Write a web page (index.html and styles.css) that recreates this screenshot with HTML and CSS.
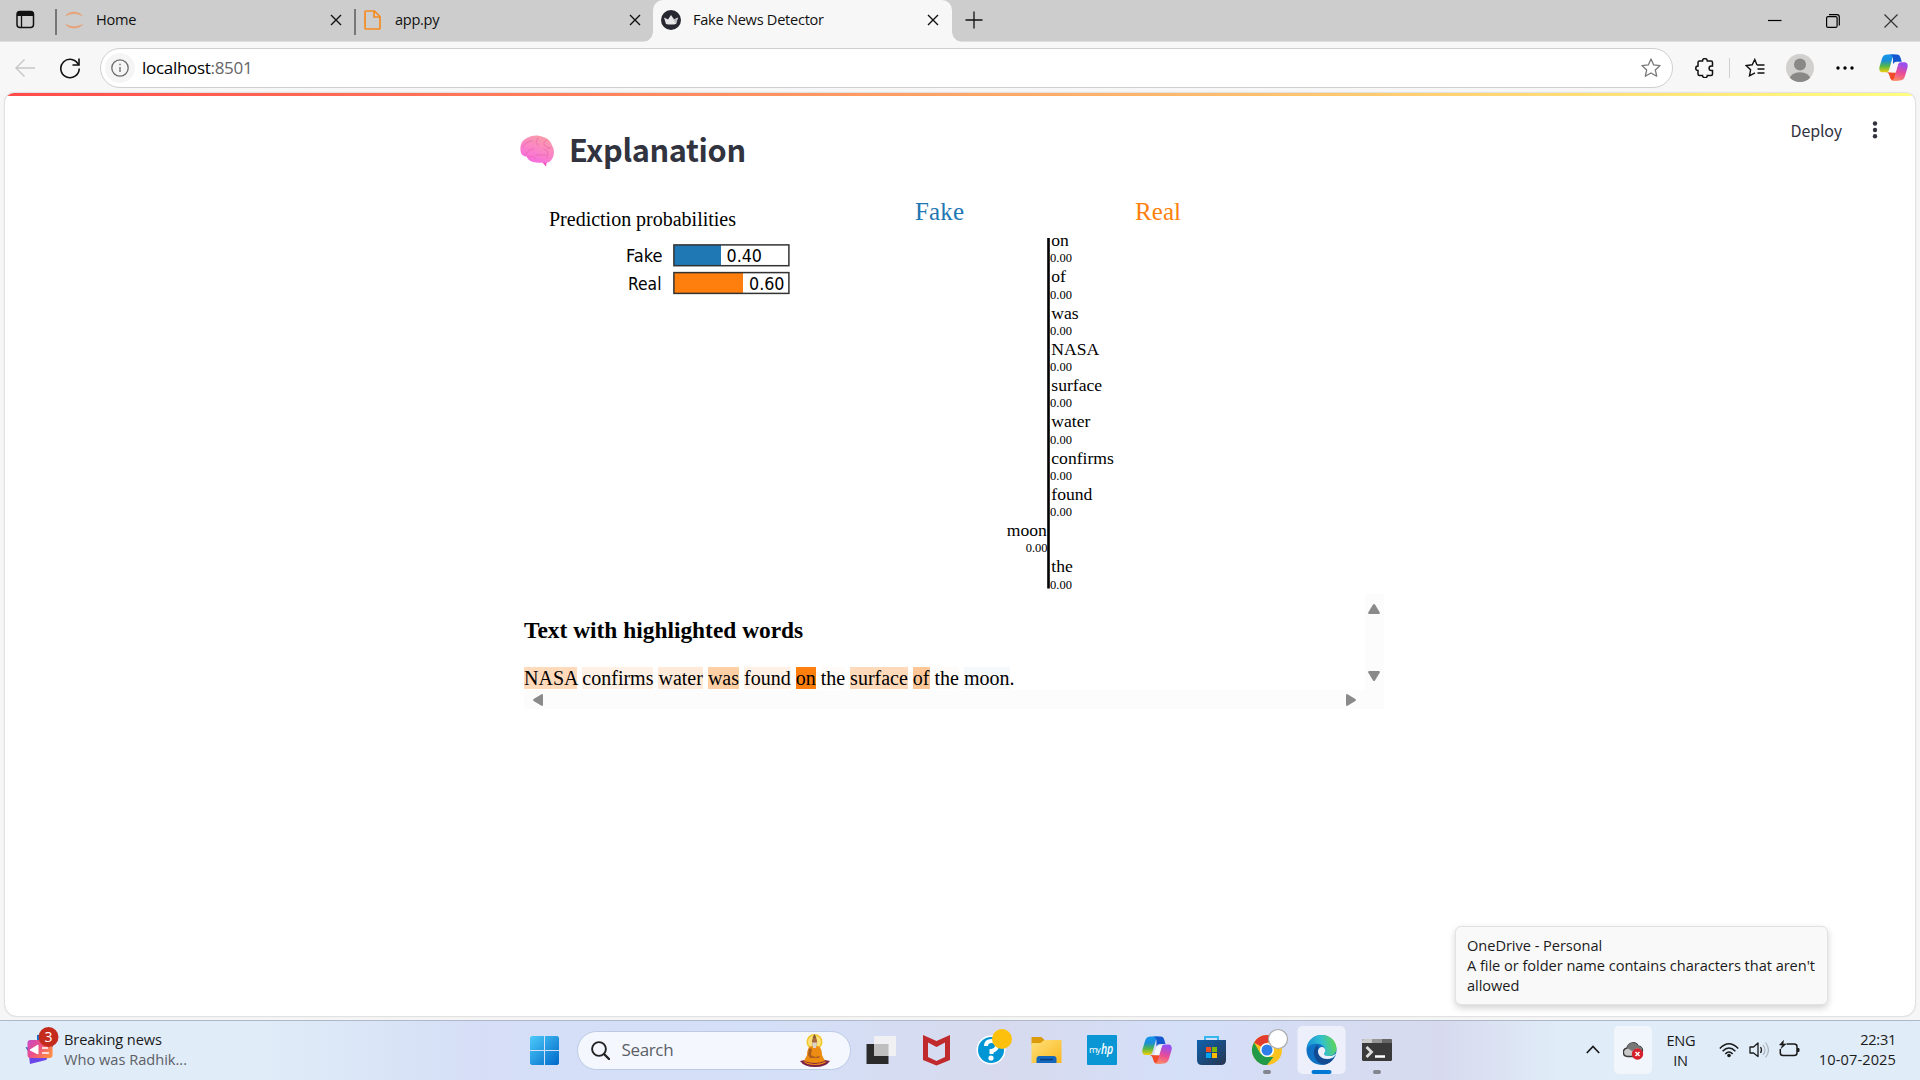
FILE: index.html
```html
<!DOCTYPE html>
<html lang="en">
<head>
<meta charset="utf-8">
<title>Fake News Detector</title>
<link rel="stylesheet" href="styles.css">
</head>
<body>
<svg class="defs" width="0" height="0" aria-hidden="true">
  <defs>
    <linearGradient id="cpA" x1="0" y1="0" x2="0" y2="1"><stop offset="0" stop-color="#1595ee"/><stop offset=".35" stop-color="#1a8fd8"/><stop offset=".65" stop-color="#54b648"/><stop offset="1" stop-color="#f2cf0c"/></linearGradient>
    <linearGradient id="cpB" x1="0.3" y1="0" x2="0" y2="1"><stop offset="0" stop-color="#9a50ee"/><stop offset=".45" stop-color="#ea4c96"/><stop offset="1" stop-color="#ff9a5c"/></linearGradient>
    <symbol id="copilot" viewBox="0 0 30 28">
      <path d="M20 0.5h-2c-2 0-3.400 1.500-4 3.500l-3.500 12c-.5 2-1.500 3-3.500 3H3.500C0.500 19-.3 16 .6 13L3 5C4 1.800 5.500.5 9 .5z" fill="url(#cpA)"/>
      <path d="M10 .5h8.500c2.500 0 3.200 1.500 4 4l1 3.500h-5c-2.500 0-3.300 1-4 3L14.500 4.500C14 2 12.500.5 10 .5z" fill="#1458ce"/>
      <path d="M7 19c2.500 0 3.500 2 4 4 .7 3 1.800 4.500 4 4.500h6c-2.500 0-3-2-2.500-4l1-4z" fill="#f04a28"/>
      <path d="M10 27.500h2c2 0 3.400-1.500 4-3.500l3.500-12.500c.5-2 1.500-3 3.500-3h3.500c3 0 3.800 3 2.900 6L27 22.500c-1 3.500-2.500 5-6 5z" fill="url(#cpB)"/>
      <path d="M17 9.500h3l-3 9.500h-5l2-7c.5-1.500 1.300-2.500 3-2.500z" fill="#f7f7fb"/>
    </symbol>
  </defs>
</svg>

<header class="tabs">
  <div class="tab-actions"><svg width="19" height="19" viewBox="0 0 19 19"><rect x="1" y="1.500" width="16.500" height="16" rx="3" fill="none" stroke="#111" stroke-width="1.500"/><path d="M1 6V4a3 3 0 0 1 3-3h10.500a3 3 0 0 1 3 3v2z" fill="#111"/><path d="M5.500 6v11" stroke="#111" stroke-width="1.300"/></svg></div>
  <div class="tab home">
    <svg width="20" height="22" viewBox="0 0 20 22"><path d="M1 7.500C3.500 1 16.500 1 19 7.500 14 4 6 4 1 7.500zM1 14.500C3.500 21 16.500 21 19 14.500 14 18 6 18 1 14.500z" fill="#e5a47c"/></svg>
    <span class="t-home">Home</span>
    <svg class="close" width="12" height="12" viewBox="0 0 12 12"><path d="M1 1l10 10M11 1L1 11" stroke="#111" stroke-width="1.400"/></svg>
  </div>
  <div class="tab app">
    <svg width="17" height="20" viewBox="0 0 17 20"><path d="M1 2a1 1 0 0 1 1-1h8.500L16 6.500V18a1 1 0 0 1-1 1H2a1 1 0 0 1-1-1zM10 1v6h6" fill="none" stroke="#f58a1f" stroke-width="1.700"/></svg>
    <span class="t-app">app.py</span>
    <svg class="close" width="12" height="12" viewBox="0 0 12 12"><path d="M1 1l10 10M11 1L1 11" stroke="#111" stroke-width="1.400"/></svg>
  </div>
  <div class="tab active">
    <svg width="20" height="20" viewBox="0 0 20 20"><circle cx="10" cy="10" r="10" fill="#262730"/><path d="M3 7.500l4 2L10 5l3 4.500 4-2-2 6.500q-5 1.200-10 0z" fill="#e6e6e8"/><path d="M10 5l3 4.500 4-2-2 6.500z" fill="#bdbdc2"/></svg>
    <span class="t-news">Fake News Detector</span>
    <svg class="close" width="12" height="12" viewBox="0 0 12 12"><path d="M1 1l10 10M11 1L1 11" stroke="#111" stroke-width="1.400"/></svg>
  </div>
  <svg class="plus" width="18" height="18" viewBox="0 0 18 18"><path d="M9 .5v17M.5 9h17" stroke="#111" stroke-width="1.300"/></svg>
  <div class="window-buttons">
    <svg width="14" height="14" viewBox="0 0 14 14"><path d="M0 6.500h13.500" stroke="#000" stroke-width="1.200"/></svg>
    <svg width="14" height="14" viewBox="0 0 14 14"><rect x=".6" y="2.600" width="10.500" height="10.800" rx="1.500" fill="none" stroke="#000" stroke-width="1.200"/><path d="M3 .7h8a2.300 2.300 0 0 1 2.300 2.300v8.500" fill="none" stroke="#000" stroke-width="1.200"/></svg>
    <svg width="14" height="14" viewBox="0 0 14 14"><path d="M.5 .5l13 13M13.500 .5l-13 13" stroke="#333" stroke-width="1.200"/></svg>
  </div>
</header>

<nav class="toolbar">
  <svg class="back" width="20" height="20" viewBox="0 0 20 20"><path d="M20 10H1M9.500 1.500L1 10l8.500 8.500" fill="none" stroke="#c6c6c6" stroke-width="1.400"/></svg>
  <svg class="reload" width="22" height="22" viewBox="0 0 22 22"><path d="M19.500 8A9.200 9.200 0 1 0 20.200 11.500" fill="none" stroke="#111" stroke-width="1.600"/><path d="M20 1.500V8h-6.500" fill="none" stroke="#111" stroke-width="1.600"/></svg>
  <div class="address">
    <span class="info"><svg width="18" height="18" viewBox="0 0 18 18"><circle cx="9" cy="9" r="8.200" fill="none" stroke="#6b6b6b" stroke-width="1.300"/><path d="M9 8v5M9 4.800v1.500" stroke="#6b6b6b" stroke-width="1.300"/></svg></span>
    <span class="url">localhost<i>:8501</i></span>
    <svg class="star" width="20" height="20" viewBox="0 0 20 20"><path d="M10 1l2.700 5.900 6.400.7-4.800 4.300 1.400 6.300L10 15l-5.700 3.200 1.400-6.300L.9 7.600l6.400-.7z" fill="none" stroke="#777" stroke-width="1.300" stroke-linejoin="round"/></svg>
  </div>
  <div class="tools">
    <svg width="19" height="20" viewBox="0 0 19 20"><path d="M3 4.500q0-1.500 1.500-1.500H7.500C7.500-.2 12.300-.2 12.300 3H16q1.500 0 1.500 1.500V8h-1.200c-3 0-3 4.500 0 4.500h1.200v3.500q0 1.500-1.500 1.500h-3.700c0 3-4.800 3-4.800 0h-3q-1.500 0-1.500-1.500v-3.500c-3 0-3-4.500 0-4.500z" fill="none" stroke="#111" stroke-width="1.500"/></svg>
    <b></b>
    <svg width="20" height="19" viewBox="0 0 20 19"><path d="M12 7L9.800 1.500 7.200 6.800l-6 .8 4.400 4.200-1.100 6L10 14.800M12 7h7.500M12.500 11h7M12.500 15h7" fill="none" stroke="#111" stroke-width="1.400"/></svg>
    <svg width="28" height="28" viewBox="0 0 28 28"><clipPath id="av"><circle cx="14" cy="14" r="14"/></clipPath><g clip-path="url(#av)"><rect width="28" height="28" fill="#d2d0ce"/><circle cx="14" cy="10.500" r="6" fill="#8a8886"/><ellipse cx="14" cy="25" rx="10.500" ry="6.800" fill="#8a8886"/></g></svg>
    <svg width="18" height="6" viewBox="0 0 18 6"><circle cx="2" cy="3" r="1.700"/><circle cx="9" cy="3" r="1.700"/><circle cx="16" cy="3" r="1.700"/></svg>
    <svg width="29" height="27"><use href="#copilot"/></svg>
  </div>
</nav>

<main class="page">
  <div class="decoration"></div>
  <div class="head">
    <svg class="brain" width="35" height="32" viewBox="0 0 35 32"><defs><linearGradient id="br" x1=".8" y1="0" x2=".3" y2="1"><stop offset="0" stop-color="#f9a0a4"/><stop offset=".5" stop-color="#fb86c4"/><stop offset="1" stop-color="#f86ae0"/></linearGradient></defs><path d="M21 26l5 5.500.8-5z" fill="#f04fc0"/><path d="M.5 15C-.3 9 3 4.500 8 2.500c4-2.300 10-3 15-.5 5 1 8 5 9 8.500 2.500 3.500 2.700 9.500 0 13.500-2 3.500-6 4.500-10 3.500-5 .5-10 0-13-2.500-1.500-1.500-2-2.500-2.500-3.500C3 21.500.5 19 .5 15z" fill="url(#br)"/><path d="M6 20c1-4 4-6 8-6M3 12c2-4 5-6 9-6M18 3l-2 4 2 3M27 5c-3 1-4 4-2 6l4 2M16 20h10M24 14l4 3-1 6M31 12l-3 2M8 22c3-1 6-1 8 2" fill="none" stroke="#e0609f" stroke-opacity=".6" stroke-width="1" stroke-linecap="round"/></svg>
    <h1>Explanation</h1>
    <div class="deploy"><span>Deploy</span><svg width="6" height="18" viewBox="0 0 6 18"><g fill="#31333f"><circle cx="3" cy="2.500" r="2.200"/><circle cx="3" cy="9" r="2.200"/><circle cx="3" cy="15.200" r="2.200"/></g></svg></div>
  </div>

  <svg class="chart" width="861" height="400" viewBox="524 194 861 400">
    <text x="549" y="226" font-size="20" textLength="187">Prediction probabilities</text>
    <g class="bars">
      <text x="626" y="262" textLength="36.500" lengthAdjust="spacingAndGlyphs">Fake</text>
      <text x="628" y="290" textLength="33.500" lengthAdjust="spacingAndGlyphs">Real</text>
      <rect x="674" y="245" width="47" height="20.500" fill="#1f77b4"/>
      <rect x="674" y="272.500" width="69" height="20.500" fill="#ff7f0e"/>
      <rect class="frame" x="673.900" y="244.900" width="115" height="20.800"/>
      <rect class="frame" x="673.900" y="272.600" width="115" height="20.800"/>
      <text x="726.500" y="262" textLength="35.500" lengthAdjust="spacingAndGlyphs">0.40</text>
      <text x="749" y="290" textLength="35.500" lengthAdjust="spacingAndGlyphs">0.60</text>
    </g>
    <text x="915" y="220" font-size="25" fill="#1f77b4" textLength="49">Fake</text>
    <text x="1135" y="220" font-size="25" fill="#ff7f0e" textLength="46">Real</text>
    <path d="M1048.500 238v350.500" stroke="#000" stroke-width="2.600"/>
    <g class="words">
      <text x="1051.300" y="246">on</text><text x="1051.300" y="282">of</text><text x="1051.300" y="319">was</text><text x="1051.300" y="355">NASA</text><text x="1051.300" y="391">surface</text><text x="1051.300" y="427">water</text><text x="1051.300" y="463.500">confirms</text><text x="1051.300" y="500">found</text><text x="1046.800" y="536" text-anchor="end">moon</text><text x="1051.300" y="572">the</text>
    </g>
    <g class="nums">
      <text x="1050" y="262">0.00</text><text x="1050" y="299">0.00</text><text x="1050" y="335">0.00</text><text x="1050" y="371">0.00</text><text x="1050" y="407">0.00</text><text x="1050" y="444">0.00</text><text x="1050" y="480">0.00</text><text x="1050" y="516">0.00</text><text x="1047.500" y="552" text-anchor="end">0.00</text><text x="1050" y="589">0.00</text>
    </g>
  </svg>

  <section class="scroller">
    <div class="doc">
      <h3>Text with highlighted words</h3>
      <p><mark class="h3x">NASA</mark> <mark class="h1x">confirms</mark> <mark class="h2x">water</mark> <mark class="h4x">was</mark> <mark class="h1x">found</mark> <mark class="h6x">on</mark> <mark class="h0x">the</mark> <mark class="h3x">surface</mark> <mark class="h5x">of</mark> <mark class="h0x">the</mark> <mark class="hbx">moon</mark>.</p>
    </div>
    <div class="vbar"><svg width="12" height="10" viewBox="0 0 12 10"><path d="M5 .6q1-1 2 0L11.800 8.500q.4 1.500-1 1.500H1.200q-1.400 0-1-1.500z" fill="#8a8a8a"/></svg><svg width="12" height="10" viewBox="0 0 12 10"><path d="M5 9.400q1 1 2 0L11.800 1.500q.4-1.500-1-1.500H1.200q-1.400 0-1 1.500z" fill="#8a8a8a"/></svg></div>
    <div class="hbar"><svg width="10" height="12" viewBox="0 0 10 12"><path d="M.6 5q-1 1 0 2L8.500 11.800q1.500.4 1.500-1V1.200Q10-.2 8.500.2z" fill="#8a8a8a"/></svg><svg width="10" height="12" viewBox="0 0 10 12"><path d="M9.400 5q1 1 0 2L1.500 11.800Q0 12.200 0 10.800V1.200Q0-.2 1.500.2z" fill="#8a8a8a"/></svg></div>
    <div class="corner"></div>
  </section>
</main>

<div class="tooltip"><span class="l1">OneDrive - Personal</span><br><span class="l2">A file or folder name contains characters that aren't</span><br><span class="l3">allowed</span></div>

<footer class="taskbar">
  <div class="news">
    <svg width="36" height="38" viewBox="0 0 36 38"><defs><linearGradient id="nw" x1="0" y1="0" x2="1" y2=".6"><stop offset="0" stop-color="#c44bc8"/><stop offset=".5" stop-color="#ee4f86"/><stop offset="1" stop-color="#ff8a45"/></linearGradient></defs><path d="M12 8l16-2v14H12z" fill="#1273d0"/><path d="M.5 20l25 6-20 3z" fill="#1260c0"/><path d="M4 29h20l-3 4-16 4z" fill="#6a45e8"/><rect x="2.500" y="13" width="25" height="18" rx="3" fill="url(#nw)"/><path d="M5 23l8-5v9z" fill="#fff" stroke="#fff"/><path d="M17 21h6M17 26h7" stroke="#ffd9d9" stroke-width="2"/><circle cx="23.500" cy="10" r="10" fill="#c42b1c"/><text x="23.500" y="15" text-anchor="middle" fill="#fff" font-size="14">3</text></svg>
    <div><span class="n1">Breaking news</span><br><span class="n2">Who was Radhik...</span></div>
  </div>
  <div class="apps">
    <svg class="start" width="29" height="29" viewBox="0 0 29 29"><defs><linearGradient id="wn" x1="0" y1="0" x2="1" y2="1"><stop offset="0" stop-color="#4ccbfa"/><stop offset="1" stop-color="#0067c8"/></linearGradient></defs><path d="M1.500 0H14v14H0V1.500zM15 0h12.500L29 1.500V14H15zM0 15h14v14H1.500L0 27.500zM15 15h14v12.500L27.500 29H15z" fill="url(#wn)"/></svg>
    <div class="search">
      <svg width="19" height="19" viewBox="0 0 19 19"><circle cx="8" cy="8" r="6.900" fill="none" stroke="#222" stroke-width="1.900"/><path d="M13 13l5 5" stroke="#222" stroke-width="2.400" stroke-linecap="round"/></svg>
      <span>Search</span>
      <svg class="buddha" width="30" height="33" viewBox="0 0 30 33"><circle cx="14.500" cy="8" r="8" fill="#f3c62f"/><circle cx="14.500" cy="8" r="6.500" fill="#fbe27a"/><path d="M14.500 0l2 4h-4z" fill="#7c5431"/><path d="M0 27q15-4 30 0-4 6-15 6T0 27z" fill="#7c2146"/><path d="M3 27q11 6 24 0-3 4-12 4T3 27z" fill="#ef8d16"/><path d="M11 12h7q4 2 4 9l3 6q-10 4-21 0l3-6q0-7 4-9z" fill="#ed8c12"/><ellipse cx="14.500" cy="8" rx="2.600" ry="4.500" fill="#a7683d"/><path d="M12 8.500h5l-1 5.500h-3z" fill="#dcd4c6"/><path d="M9 14l3 1-1 6 4 2 5-1-1 2h-9l-2-3z" fill="#9b5422" opacity=".8"/></svg>
    </div>
    <svg class="app-icon" viewBox="0 0 55 60"><path d="M12.500 24h22v20h-22z" fill="#2b2b2b"/><rect x="20" y="16" width="22" height="20" rx="1" fill="#f1f1f2" opacity=".96"/><path d="M20 24h14.500v12H20z" fill="#bfbfbf"/></svg>
    <svg class="app-icon" viewBox="0 0 55 60"><path d="M14 15l13.500 6L41 15v25l-13.500 5.500L14 40z" fill="#c02a2c"/><path d="M19 22.500l8.500 4.500 8.500-4.500v14.500L27.500 41 19 37z" fill="#d6dcf2"/></svg>
    <svg class="app-icon" viewBox="0 0 55 60"><circle cx="27" cy="30" r="14.500" fill="#fff"/><circle cx="27" cy="30" r="13" fill="#0096d6"/><path d="M22 26q0-5 5.500-5t5.500 4.500-5.500 5.500v3" fill="none" stroke="#fff" stroke-width="4"/><circle cx="27" cy="38" r="2.600" fill="#fff"/><circle cx="38" cy="19" r="10" fill="#fdc10d"/></svg>
    <svg class="app-icon" viewBox="0 0 55 60"><defs><linearGradient id="fo" x1="0" y1="0" x2="1" y2="1"><stop offset="0" stop-color="#ffe07a"/><stop offset="1" stop-color="#f9b820"/></linearGradient></defs><path d="M12.500 17h10l3 3-2 5h-11z" fill="#dc9b0d"/><path d="M12.500 23h9l4-3h17v23h-30z" fill="url(#fo)"/><path d="M17.500 43v-4q0-3 3-3h14q3 0 3 3v4z" fill="#1467ba"/><path d="M21 39.500h13" stroke="#073f82" stroke-width="1.500"/></svg>
    <svg class="app-icon" viewBox="0 0 55 60"><rect x="13" y="15" width="30" height="30" rx="1" fill="#0a96d4"/><text x="15" y="33" fill="#fff" font-size="9" textLength="11.500">my</text><text x="27" y="34" fill="#fff" font-size="15" font-style="italic" font-weight="600" textLength="12" lengthAdjust="spacingAndGlyphs">hp</text></svg>
    <svg class="app-icon" viewBox="0 0 55 60"><use href="#copilot" x="13" y="16" width="30" height="28"/></svg>
    <svg class="app-icon" viewBox="0 0 55 60"><defs><linearGradient id="st" x1="0" y1="0" x2="1" y2="1"><stop offset="0" stop-color="#0e62ae"/><stop offset="1" stop-color="#27344f"/></linearGradient></defs><path d="M21 22v-5h13v5" fill="none" stroke="#35b8ee" stroke-width="2"/><path d="M13 20h29v20q0 5-5 5H18q-5 0-5-5z" fill="url(#st)"/><path d="M22 27h5v5h-5z" fill="#f25022"/><path d="M28 27h5v5h-5z" fill="#7fba00"/><path d="M22 33h5v5h-5z" fill="#00a4ef"/><path d="M28 33h5v5h-5z" fill="#ffb900"/></svg>
    <svg class="app-icon" viewBox="0 0 55 60"><circle cx="28" cy="30" r="15" fill="#fcc31e"/><path d="M28 30L15 22.500A15 15 0 0 1 41 22.500H28z" fill="#e33b2e"/><path d="M15 22.500L28 45A15 15 0 0 1 15 22.500z" fill="#219a49"/><path d="M21 33l7 4h6.500L28 45a15 15 0 0 1-7-1.500z" fill="#219a49"/><circle cx="28" cy="30" r="7" fill="#fff"/><circle cx="28" cy="30" r="5.500" fill="#2f7de9"/><circle cx="39" cy="19" r="9.500" fill="#fff" stroke="#aaa" stroke-width="1.200"/><rect x="24" y="50" width="8" height="4" rx="2" fill="#84858f"/></svg>
    <svg class="app-icon" viewBox="0 0 55 60"><defs><linearGradient id="ed" x1="0" y1=".5" x2="1" y2=".3"><stop offset="0" stop-color="#168ed6"/><stop offset=".5" stop-color="#30bed2"/><stop offset="1" stop-color="#62d84b"/></linearGradient></defs><rect x="3.500" y="6" width="48" height="48" rx="5" fill="#edf0fa"/><circle cx="27.500" cy="30" r="15" fill="#0f72c4"/><path d="M12.600 29C13.500 20 20 15 27.500 15 37 15 42.500 22 42.500 28.500c0 5-4 7.500-8 7.500-3 0-4.500-1-4.500-2 0-.8 1.200-1.500 1.200-3.700 0-3.600-3.500-6.600-8.200-6.600-6 0-9 2.500-10.400 5.300z" fill="url(#ed)"/><path d="M24 25c-3 1.500-4.500 5-4 9 .7 6 5 10 10 10.700 4-.6 8-3.200 10-7-3 1.500-6 1.800-9 1-4-1.200-7-5-7-8.700 0-2 .5-4 0-5z" fill="#124b91"/><path d="M30 34c0-.8 1.200-1.500 1.200-3.700 0-2-1.500-3.300-3.200-3.300-2.500 0-4 2.500-4 4.500 0 4 4 7.500 9 7.500 4 0 7-1.500 8.700-4.500l.8 1.500 2-2-2-1c-2 2.500-5 3-8 3-3 0-4.500-1-4.500-2z" fill="#edf0fa"/><rect x="17.500" y="50" width="20" height="4" rx="2" fill="#0078d4"/></svg>
    <svg class="app-icon" viewBox="0 0 55 60"><rect x="13" y="19" width="30" height="22" rx="1.500" fill="#3a3a3a"/><path d="M13 23v-2.500q0-1.500 1.500-1.500h8.500v4z" fill="#cbcbcb"/><path d="M23 19h10v4H23z" fill="#969696"/><path d="M33 19h8.500q1.500 0 1.500 1.500V23H33z" fill="#666"/><path d="M17.500 27l5 5-5 5" fill="none" stroke="#ddd" stroke-width="2.800"/><path d="M26 36.500h10" stroke="#fff" stroke-width="2.500"/><rect x="24" y="50" width="8" height="4" rx="2" fill="#84858f"/></svg>
  </div>
  <div class="tray">
    <svg class="chev" width="14" height="9" viewBox="0 0 14 9"><path d="M.8 8L7 1.500 13.200 8" fill="none" stroke="#1a1a1a" stroke-width="1.700"/></svg>
    <div class="drive"><svg width="21" height="18" viewBox="0 0 21 18"><path d="M5 14.500C-1 14.500-1 7 4 6 6-.5 13-.5 15 4c4 0 5 4 4 6l-8 4.500z" fill="#c9c9c9" stroke="#3b3b3b" stroke-width="1.500"/><path d="M4 6C6-.5 13-.5 15 4c3 0 4 2 4 4l-5-2-5 3z" fill="#777"/><circle cx="14.500" cy="12" r="5.700" fill="#d6202c"/><path d="M12.500 10l4 4M16.500 10l-4 4" stroke="#fff" stroke-width="1.500"/></svg></div>
    <div class="lang"><span class="eng">ENG</span><br>IN</div>
    <svg class="wifi" width="20" height="16" viewBox="0 0 20 16"><g fill="none" stroke="#1a1a1a" stroke-width="1.500"><path d="M.8 6.500q9.200-9.500 18.400 0M3.600 9.200q6.400-6.500 12.800 0M6.300 12q3.700-3.800 7.400 0"/></g><circle cx="10" cy="13.500" r="1.800" fill="#1a1a1a"/></svg>
    <svg class="vol" width="21" height="18" viewBox="0 0 21 18"><path d="M1 6h3.500L9 2v13.500L4.500 12H1z" fill="none" stroke="#1a1a1a" stroke-width="1.300" stroke-linejoin="round"/><path d="M11.500 6q2 3 0 6" fill="none" stroke="#1a1a1a" stroke-width="1.300"/><path d="M14 4q4 5 0 10M16.500 1.500q6 7.500 0 15" fill="none" stroke="#a9b1b9" stroke-width="1.200"/></svg>
    <svg class="bat" width="21" height="18" viewBox="0 0 21 18"><path d="M7.500 4H15q3 0 3 2.500v6.500q0 2.500-3 2.500H4q-2.700 0-2.700-2.500V9" fill="none" stroke="#1a1a1a" stroke-width="1.500"/><path d="M18 8h1.500q1 0 1 1v2q0 1-1 1H18z" fill="#1a1a1a"/><path d="M4.500.5L.5 5h3L2 8.500 7 4H4z" fill="#1a1a1a" stroke="#1a1a1a" stroke-width=".6"/></svg>
    <div class="clock"><span class="time">22:31</span><br><span class="date">10-07-2025</span></div>
  </div>
</footer>
</body>
</html>
```
FILE: styles.css
```css
* { box-sizing: border-box; }
html, body { height: 100%; }
body {
  margin: 0;
  display: flex;
  flex-direction: column;
  overflow: hidden;
  background: #f6f6f6;
  color: #1b1b1b;
  font-family: "Open Sans", "Noto Sans", sans-serif;
  font-size: 14.6px;
  letter-spacing: -0.3px;
}
svg { display: block; flex: none; }
.defs { position: absolute; }

/* tab strip */
.tabs { display: flex; height: 42px; background: #cdcdcd; flex: none; border-bottom: 1px solid #dedede; }
.tab-actions { width: 55px; padding: 10px 0 0 16px; }
.tab { display: flex; align-items: center; height: 40px; position: relative; white-space: nowrap; color: #111; }
.tab span { padding-bottom: 2px; }
.home { width: 299px; padding-left: 9px; }
.app { width: 299px; padding-left: 10px; }
.home::before, .app::before { content: ""; width: 1.500px; height: 26px; background: #777; position: absolute; left: 0; top: 9px; }
.tab .close { margin-left: auto; }
.home .close, .app .close { margin-right: 12px; }
.t-home { margin-left: 12px; }
.t-app { margin-left: 14px; }
.active { width: 299px; height: 42px; padding: 0 13px 2px 8px; background: #f7f7f7; border-radius: 10px 10px 0 0; }
.active::before, .active::after {
  content: ""; position: absolute; bottom: 0; width: 10px; height: 10px;
}
.active::before { left: -10px; background: radial-gradient(circle at 0 0, transparent 9.500px, #f7f7f7 10px); }
.active::after { right: -10px; background: radial-gradient(circle at 100% 0, transparent 9.500px, #f7f7f7 10px); }
.t-news { margin-left: 12px; letter-spacing: -0.27px; }
.plus { margin: 11px 0 0 13px; }
.window-buttons { display: flex; gap: 44px; margin: 14px 22px 0 auto; }

/* toolbar */
.toolbar { display: flex; align-items: center; height: 51px; padding: 1px 12px 0 15px; background: #f7f7f7; flex: none; }
.reload { margin-left: 24px; }
.address { display: flex; align-items: center; width: 1573px; height: 40px; margin: 0 0 1px 19px; border: 1px solid #cfcfcf; border-radius: 20px; background: #fff; flex: none; }
.info { display: flex; align-items: center; justify-content: center; width: 30px; height: 30px; margin-left: 4px; border-radius: 50%; background: #f5f5f5; }
.url { margin-left: 7px; padding-bottom: 1px; font-size: 17px; letter-spacing: -0.3px; color: #000; }
.url i { font-style: normal; color: #666; }
.star { margin: 0 11px 0 auto; }
.tools { display: flex; align-items: center; margin: 0 0 1px 22px; flex: none; }
.tools b { width: 1px; height: 20px; background: #cfcfcf; margin: 0 15px 0 15px; }
.tools svg:nth-of-type(3) { margin-left: 21px; }
.tools svg:nth-of-type(4) { margin-left: 22px; }
.tools svg:nth-of-type(5) { margin-left: 25px; }

/* page */
.page { width: 1910px; height: 923px; margin-left: 5px; background: #fff; border-radius: 9px 9px 12px 12px; overflow: hidden; flex: none; box-shadow: 0 0 2px #aaa; }
.decoration { height: 3px; background: linear-gradient(90deg, #ff4b4b, #fffd80); }
.head { display: flex; height: 98px; align-items: flex-start; font-family: "Noto Sans CJK SC", sans-serif; color: #31333f; }
.brain { margin: 39px 0 0 515px; }
.head h1 { margin: 30px 0 0 14px; font-size: 30.700px; line-height: 46px; font-weight: 600; letter-spacing: -0.35px; }
.deploy { display: flex; align-items: center; gap: 30px; margin: 22px 37px 0 auto; font-size: 16px; line-height: 24px; letter-spacing: -0.15px; }
.chart { margin-left: 519px; font-family: "Liberation Serif", serif; letter-spacing: 0; }
.bars { font-family: "DejaVu Sans Condensed", "DejaVu Sans", sans-serif; font-size: 17px; }
.frame { fill: none; stroke: #333; stroke-width: 1.500px; }
.words { font-size: 17.600px; }
.nums { font-size: 12.500px; }

.scroller { display: grid; grid-template-columns: 841px 19px; grid-template-rows: 96px 19px; margin-left: 519px; width: 860px; font-family: "Liberation Serif", serif; color: #000; letter-spacing: 0; }
.doc h3 { margin: 21px 0 0; font-size: 23.400px; line-height: 30px; }
.doc p { margin: 22px 0 0; font-size: 20px; line-height: 22px; white-space: nowrap; }
mark { color: inherit; }
.h0x { background: #fffbf8; }
.h1x { background: #fff1e6; }
.h2x { background: #ffead9; }
.h3x { background: #ffdabb; }
.h4x { background: #ffd0a6; }
.h5x { background: #ffc797; }
.h6x { background: #ff7f0e; }
.hbx { background: #f5f9fc; }
.vbar, .hbar, .corner { background: #fcfcfc; }
.vbar { display: flex; flex-direction: column; justify-content: space-between; align-items: center; padding: 10px 1px 9px 0; }
.hbar { display: flex; justify-content: space-between; align-items: center; padding: 0 9px 0 9px; }

/* notification tooltip over the page */
.tooltip { position: absolute; left: 1455px; top: 926px; width: 373px; height: 79px; padding: 8px 0 0 11px; border: 1px solid #e2e2e2; border-radius: 6px; background: #f9f9f9; box-shadow: 0 3px 7px rgba(0,0,0,.18); line-height: 20px; white-space: nowrap; letter-spacing: -0.04px; }

/* taskbar */
.taskbar { display: flex; width: 1920px; height: 60px; margin-top: 4px; flex: none; border-top: 1px solid #adb9c8; background: linear-gradient(90deg, #e0ecf8 0, #e0ecf8 260px, #d5def6 480px, #d4e0f8 760px, #d7daee 1000px, #d4dff8 1180px, #d7daee 1440px, #e0ecf8 1560px, #e0ecf8 100%); line-height: 20px; white-space: nowrap; }
.news { width: 530px; display: flex; padding: 6px 0 0 25px; gap: 3px; letter-spacing: -0.1px; }
.news > div { padding-top: 2px; }
.n2 { color: #5c6066; letter-spacing: 0; }
.apps { display: flex; }
.start { margin-top: 15px; }
.search { display: flex; align-items: center; width: 274px; height: 39px; margin: 9.500px 3px 0 17.500px; padding: 0 20px 0 13px; border: 1px solid #bccae6; border-radius: 20px; background: #f4f7fe; font-size: 17px; letter-spacing: -0.35px; color: #5c5f66; }
.search span { margin-left: 12px; }
.buddha { margin-left: auto; }
.app-icon { width: 55px; height: 60px; margin-top: -1px; }
.tray { display: flex; flex: 1; padding-right: 24px; }
.chev { margin: 24px 0 0 182px; }
.drive { width: 38px; height: 48px; margin: 5px 0 0 14px; padding: 16px 0 0 9px; border-radius: 5px; background: #f1f6fd; }
.lang { width: 28px; margin: 9px 0 0 15px; text-align: center; }
.wifi { margin: 21px 0 0 24px; }
.vol { margin: 20px 0 0 10px; }
.bat { margin: 19px 0 0 9px; }
.clock { margin: 8px 0 0 auto; text-align: right; }
.date { letter-spacing: 0.1px; }
```
